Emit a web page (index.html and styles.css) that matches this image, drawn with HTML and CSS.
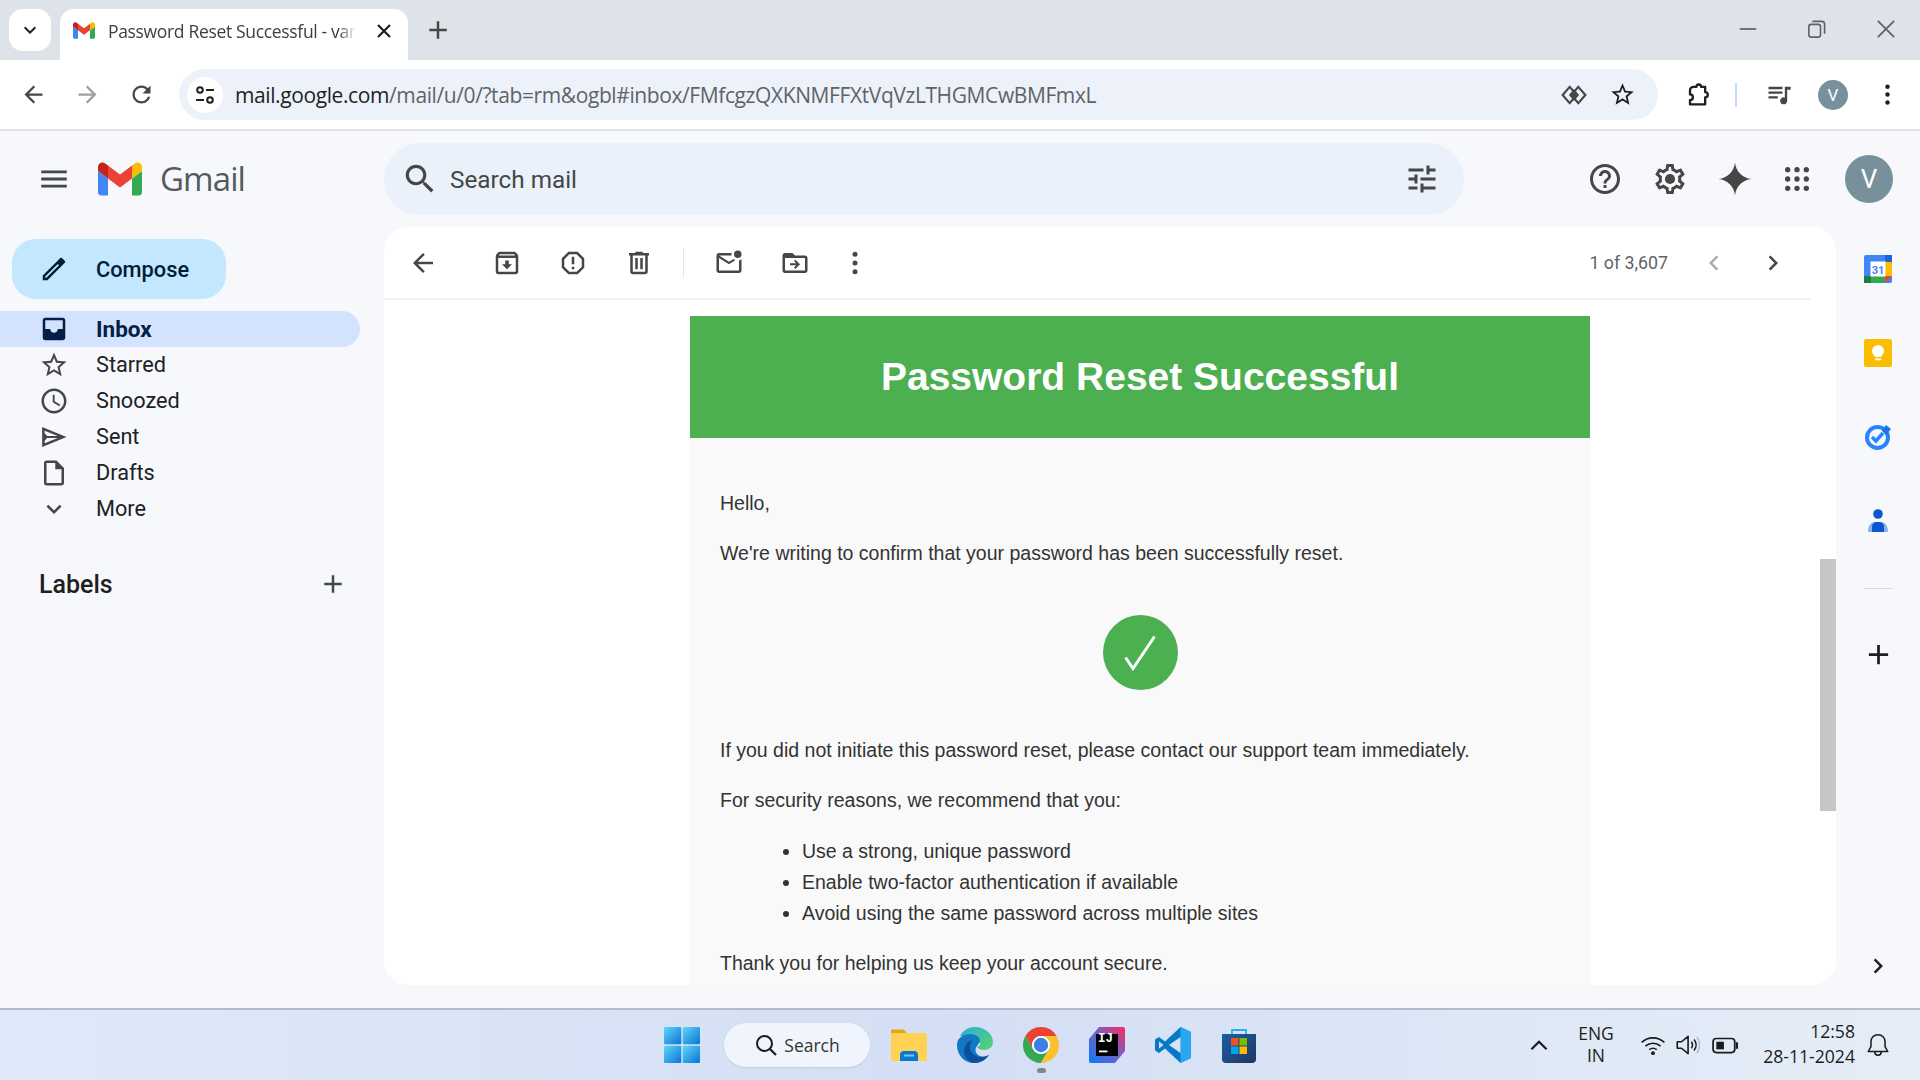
FILE: index.html
```html
<!DOCTYPE html>
<html lang="en">
<head>
<meta charset="utf-8">
<title>Password Reset Successful</title>
<link rel="stylesheet" href="styles.css">
</head>
<body>
<svg class="sprite" aria-hidden="true">
  <defs>
    <symbol id="back" viewBox="0 0 24 24"><path d="M20 11H7.83l5.59-5.59L12 4l-8 8 8 8 1.41-1.41L7.83 13H20v-2z"/></symbol>
    <symbol id="forward" viewBox="0 0 24 24"><path d="M12 4l-1.41 1.41L16.17 11H4v2h12.17l-5.58 5.59L12 20l8-8z"/></symbol>
    <symbol id="reload" viewBox="0 0 24 24"><path d="M17.65 6.35C16.2 4.9 14.21 4 12 4c-4.42 0-7.99 3.58-7.99 8s3.57 8 7.99 8c3.73 0 6.84-2.55 7.73-6h-2.08c-.82 2.33-3.04 4-5.65 4-3.31 0-6-2.69-6-6s2.69-6 6-6c1.66 0 3.14.69 4.22 1.78L13 11h7V4l-2.35 2.35z"/></symbol>
    <symbol id="star" viewBox="0 0 24 24"><path d="M22 9.24l-7.19-.62L12 2 9.19 8.63 2 9.24l5.46 4.73L5.82 21 12 17.27 18.18 21l-1.63-7.03L22 9.24zM12 15.4l-3.76 2.27 1-4.28-3.32-2.88 4.38-.38L12 6.1l1.71 4.04 4.38.38-3.32 2.88 1 4.28L12 15.4z"/></symbol>
    <symbol id="menu" viewBox="0 0 24 24"><path d="M3 18h18v-2H3v2zm0-5h18v-2H3v2zm0-7v2h18V6H3z"/></symbol>
    <symbol id="search" viewBox="0 0 24 24"><path d="M15.5 14h-.79l-.28-.27C15.41 12.59 16 11.11 16 9.5 16 5.91 13.09 3 9.5 3S3 5.91 3 9.5 5.91 16 9.5 16c1.61 0 3.09-.59 4.23-1.57l.27.28v.79l5 4.99L20.49 19l-4.99-5zm-6 0C7.01 14 5 11.99 5 9.5S7.01 5 9.5 5 14 7.01 14 9.5 11.99 14 9.5 14z"/></symbol>
    <symbol id="tune" viewBox="0 0 24 24"><path d="M3 17v2h6v-2H3zM3 5v2h10V5H3zm10 16v-2h8v-2h-8v-2h-2v6h2zM7 9v2H3v2h4v2h2V9H7zm14 4v-2H11v2h10zm-6-4h2V7h4V5h-4V3h-2v6z"/></symbol>
    <symbol id="help" viewBox="0 0 24 24"><path d="M11 18h2v-2h-2v2zm1-16C6.48 2 2 6.48 2 12s4.48 10 10 10 10-4.48 10-10S17.52 2 12 2zm0 18c-4.41 0-8-3.59-8-8s3.59-8 8-8 8 3.59 8 8-3.59 8-8 8zm0-14c-2.21 0-4 1.79-4 4h2c0-1.1.9-2 2-2s2 .9 2 2c0 2-3 1.75-3 5h2c0-2.25 3-2.5 3-5 0-2.21-1.79-4-4-4z"/></symbol>
    <symbol id="gear" viewBox="0 0 24 24"><path d="M19.43 12.98c.04-.32.07-.64.07-.98 0-.34-.03-.66-.07-.98l2.11-1.65c.19-.15.24-.42.12-.64l-2-3.46c-.09-.16-.26-.25-.44-.25-.06 0-.12.01-.17.03l-2.49 1c-.52-.4-1.08-.73-1.69-.98l-.38-2.65C14.46 2.18 14.25 2 14 2h-4c-.25 0-.46.18-.49.42l-.38 2.65c-.61.25-1.17.59-1.69.98l-2.49-1c-.06-.02-.12-.03-.18-.03-.17 0-.34.09-.43.25l-2 3.46c-.13.22-.07.49.12.64l2.11 1.65c-.04.32-.07.65-.07.98 0 .33.03.66.07.98l-2.11 1.65c-.19.15-.24.42-.12.64l2 3.46c.09.16.26.25.44.25.06 0 .12-.01.17-.03l2.49-1c.52.4 1.08.73 1.69.98l.38 2.65c.03.24.24.42.49.42h4c.25 0 .46-.18.49-.42l.38-2.65c.61-.25 1.17-.59 1.69-.98l2.49 1c.06.02.12.03.18.03.17 0 .34-.09.43-.25l2-3.46c.12-.22.07-.49-.12-.64l-2.11-1.65zm-1.98-1.71c.04.31.05.52.05.73 0 .21-.02.43-.05.73l-.14 1.13.89.7 1.08.84-.7 1.21-1.27-.51-1.04-.42-.9.68c-.43.32-.84.56-1.25.73l-1.06.43-.16 1.13-.2 1.35h-1.4l-.19-1.35-.16-1.13-1.06-.43c-.43-.18-.83-.41-1.23-.71l-.91-.7-1.06.43-1.27.51-.7-1.21 1.08-.84.89-.7-.14-1.13c-.03-.31-.05-.54-.05-.74s.02-.43.05-.73l.14-1.13-.89-.7-1.08-.84.7-1.21 1.27.51 1.04.42.9-.68c.43-.32.84-.56 1.25-.73l1.06-.43.16-1.13.2-1.35h1.39l.19 1.35.16 1.13 1.06.43c.43.18.83.41 1.23.71l.91.7 1.06-.43 1.27-.51.7 1.21-1.07.85-.89.7.14 1.13z"/><circle cx="12" cy="12" r="3.4"/></symbol>
    <symbol id="spark" viewBox="0 0 24 24"><path d="M12 1c.6 6 5 10.400 11 11-6 .6-10.400 5-11 11-.6-6-5-10.400-11-11 6-.6 10.400-5 11-11z"/></symbol>
    <symbol id="grid" viewBox="0 0 24 24"><circle cx="5" cy="5" r="2"/><circle cx="12" cy="5" r="2"/><circle cx="19" cy="5" r="2"/><circle cx="5" cy="12" r="2"/><circle cx="12" cy="12" r="2"/><circle cx="19" cy="12" r="2"/><circle cx="5" cy="19" r="2"/><circle cx="12" cy="19" r="2"/><circle cx="19" cy="19" r="2"/></symbol>
    <symbol id="inbox" viewBox="0 0 24 24"><path fill-rule="evenodd" d="M5 3h14c1.100 0 2 .9 2 2v14c0 1.100-.9 2-2 2H5c-1.100 0-2-.9-2-2V5c0-1.100.9-2 2-2zm0 2v7h4c0 1.660 1.340 3 3 3s3-1.340 3-3h4V5H5z"/></symbol>
    <symbol id="clock" viewBox="0 0 24 24"><path d="M11.990 2C6.470 2 2 6.480 2 12s4.470 10 9.990 10C17.520 22 22 17.520 22 12S17.520 2 11.990 2zM12 20c-4.420 0-8-3.580-8-8s3.580-8 8-8 8 3.580 8 8-3.580 8-8 8zm.5-13H11v6l5.250 3.150.75-1.230-4.500-2.670z"/></symbol>
    <symbol id="sent" viewBox="0 0 24 24"><path d="M2.500 4v16L22 12 2.500 4zm2 3l10.500 4.200H6.500L4.500 9V7zm0 10v-2l2-2.200H15L4.500 17z" fill-rule="evenodd"/></symbol>
    <symbol id="draft" viewBox="0 0 24 24"><path d="M14 2H6c-1.100 0-2 .9-2 2v16c0 1.100.9 2 2 2h12c1.100 0 2-.9 2-2V8l-6-6zM6 20V4h7v5h5v11H6z"/></symbol>
    <symbol id="down" viewBox="0 0 24 24"><path d="M16.590 8.590L12 13.170 7.410 8.590 6 10l6 6 6-6z"/></symbol>
    <symbol id="add" viewBox="0 0 24 24"><path d="M19 13h-6v6h-2v-6H5v-2h6V5h2v6h6v2z"/></symbol>
    <symbol id="pencil" viewBox="0 0 24 24"><path d="M20.700 7.040a1 1 0 0 0 0-1.410l-2.340-2.340a1 1 0 0 0-1.410 0l-1.840 1.830L3 17.250V21h3.750L18.870 8.880l1.830-1.840zM5.920 19H5v-.92L15.060 8.020l.92.92L5.920 19z"/></symbol>
    <symbol id="archive" viewBox="0 0 24 24"><path d="M20.540 5.230l-1.390-1.680C18.880 3.210 18.470 3 18 3H6c-.47 0-.88.21-1.160.55L3.460 5.230C3.170 5.570 3 6.020 3 6.500V19c0 1.100.9 2 2 2h14c1.100 0 2-.9 2-2V6.500c0-.48-.17-.93-.46-1.270zM6.240 5h11.520l.81.97H5.440l.8-.97zM5 19V8h14v11H5zm8.450-9h-2.900v3H8l4 4 4-4h-2.550z"/></symbol>
    <symbol id="report" viewBox="0 0 24 24"><path d="M15.730 3H8.270L3 8.270v7.460L8.270 21h7.460L21 15.730V8.270L15.730 3zM19 14.900L14.900 19H9.100L5 14.900V9.100L9.100 5h5.800L19 9.100v5.800zM11 7h2v6h-2zm0 8h2v2h-2z"/></symbol>
    <symbol id="trash" viewBox="0 0 24 24"><path d="M15 4V3H9v1H4v2h1v13c0 1.100.9 2 2 2h10c1.100 0 2-.9 2-2V6h1V4h-5zm2 15H7V6h10v13zM9 8h2v9H9zm4 0h2v9h-2z"/></symbol>
    <symbol id="unread" viewBox="0 0 24 24"><path d="M22 8.980V18c0 1.100-.9 2-2 2H4c-1.100 0-2-.9-2-2V6c0-1.100.9-2 2-2h10.100c-.06.32-.1.66-.1 1s.04.68.1 1H4l8 5 3.670-2.290c.47.43 1.020.76 1.630.98L12 13 4 8v10h16V9.900c.74-.15 1.420-.48 2-.92z"/><circle cx="19" cy="5" r="3"/></symbol>
    <symbol id="move" viewBox="0 0 24 24"><path d="M20 6h-8l-2-2H4c-1.100 0-2 .9-2 2v12c0 1.100.9 2 2 2h16c1.100 0 2-.9 2-2V8c0-1.100-.9-2-2-2zm0 12H4V8h16v10zM12.300 9.300l-1.100 1.100 1.800 1.800H8v1.600h5l-1.800 1.800 1.100 1.100 3.700-3.700z"/></symbol>
    <symbol id="vert" viewBox="0 0 24 24"><circle cx="12" cy="5" r="2"/><circle cx="12" cy="12" r="2"/><circle cx="12" cy="19" r="2"/></symbol>
    <symbol id="prev" viewBox="0 0 24 24"><path d="M15.410 7.410L14 6l-6 6 6 6 1.410-1.410L10.830 12z"/></symbol>
    <symbol id="next" viewBox="0 0 24 24"><path d="M8.590 16.590L10 18l6-6-6-6-1.410 1.410L13.170 12z"/></symbol>
    <symbol id="gm" viewBox="52 42 88 66"><path fill="#4285f4" d="M58 108h14V74L52 59v43c0 3.320 2.690 6 6 6"/><path fill="#34a853" d="M120 108h14c3.320 0 6-2.690 6-6V59l-20 15"/><path fill="#fbbc04" d="M120 48v26l20-15v-8c0-7.420-8.470-11.650-14.400-7.200"/><path fill="#ea4335" d="M72 74V48l24 18 24-18v26L96 92"/><path fill="#c5221f" d="M52 51v8l20 15V48l-5.600-4.200c-5.940-4.450-14.400-.22-14.400 7.200"/></symbol>
  </defs>
</svg>

<div class="screen">
  <header class="tabstrip">
    <button class="tabsearch"><svg class="i i-24"><use href="#down"/></svg></button>
    <div class="tab">
      <svg class="favicon"><use href="#gm"/></svg>
      <span class="tabtitle">Password Reset Successful - var</span>
      <svg class="i i-24 tabclose" viewBox="0 0 24 24"><path d="M6 6l12 12M18 6L6 18" fill="none" stroke="#1f1f1f" stroke-width="2.200"/></svg>
    </div>
    <svg class="i newtab"><use href="#add"/></svg>
    <div class="winctl">
      <svg class="wbtn" viewBox="0 0 24 24"><path d="M5 12h14" stroke="#5f6368" stroke-width="1.500"/></svg>
      <svg class="wbtn" viewBox="0 0 24 24"><rect x="5" y="8" width="10" height="11" rx="2" fill="none" stroke="#5f6368" stroke-width="1.400"/><path d="M8 5.500h8a2.500 2.500 0 0 1 2.500 2.500v8" fill="none" stroke="#5f6368" stroke-width="1.400"/></svg>
      <svg class="wbtn" viewBox="0 0 24 24"><path d="M5 5l14 14M19 5L5 19" stroke="#5f6368" stroke-width="1.500"/></svg>
    </div>
  </header>

  <nav class="toolbar">
    <svg class="i navbtn"><use href="#back"/></svg>
    <svg class="i navbtn dim"><use href="#forward"/></svg>
    <svg class="i navbtn"><use href="#reload"/></svg>
    <div class="omnibox">
      <span class="siteinfo">
        <svg class="i i-24" viewBox="0 0 24 24"><g fill="none" stroke="#1f1f1f" stroke-width="2"><circle cx="7" cy="7" r="2.800"/><circle cx="17" cy="17" r="2.800"/><path d="M13 7h8M3 17h8"/></g></svg>
      </span>
      <span class="url"><span class="host">mail.google.com</span>/mail/u/0/?tab=rm&amp;ogbl#inbox/FMfcgzQXKNMFFXtVqVzLTHGMCwBMFmxL</span>
      <svg class="omniicon" viewBox="0 0 24 24"><g fill="none" stroke="#444746" stroke-width="2" stroke-linejoin="miter"><path d="M8 4.500L1.500 12 8 19.500 14.500 12z"/><path d="M16 4.500L22.500 12 16 19.500 9.500 12z"/></g><path d="M12 6.500l4.700 5.500-4.700 5.500L7.300 12z" fill="#444746"/></svg>
      <svg class="omniicon star"><use href="#star"/></svg>
    </div>
    <svg class="tbicon puzzle" viewBox="0 0 24 24"><path d="M9 5h2.500a2 2 0 0 1 4 0H19v4.500a2.200 2.200 0 0 1 0 4.500V20H6v-3.500a2.500 2.500 0 0 0 0-5V8a3 3 0 0 1 3-3z" fill="none" stroke="#1f1f1f" stroke-width="2" stroke-linejoin="round"/></svg>
    <span class="tbsep"></span>
    <svg class="tbicon media" viewBox="0 0 24 24"><path d="M3 5h12v2H3zM3 9h12v2H3zM3 13h8v2H3z" fill="#444746"/><path d="M17 5h5v2.500h-3V17a3 3 0 1 1-2-2.800z" fill="#444746"/></svg>
    <span class="avatar avatar-sm">V</span>
    <svg class="i tbdots"><use href="#vert"/></svg>
  </nav>

  <div class="app">
    <aside class="sidebar">
      <div class="brand">
        <svg class="i hamburger"><use href="#menu"/></svg>
        <svg class="gmlogo"><use href="#gm"/></svg>
        <span class="gmailword">Gmail</span>
      </div>
      <button class="compose"><svg class="i navicon pen"><use href="#pencil"/></svg><span>Compose</span></button>
      <ul class="navlist">
        <li class="navitem active"><svg class="i navicon"><use href="#inbox"/></svg><span>Inbox</span></li>
        <li class="navitem"><svg class="i navicon"><use href="#star"/></svg><span>Starred</span></li>
        <li class="navitem"><svg class="i navicon"><use href="#clock"/></svg><span>Snoozed</span></li>
        <li class="navitem"><svg class="i navicon"><use href="#sent"/></svg><span>Sent</span></li>
        <li class="navitem"><svg class="i navicon"><use href="#draft"/></svg><span>Drafts</span></li>
        <li class="navitem"><svg class="i navicon"><use href="#down"/></svg><span>More</span></li>
      </ul>
      <div class="labels"><span>Labels</span><svg class="i labeladd"><use href="#add"/></svg></div>
    </aside>

    <div class="center">
      <div class="topbar">
        <div class="searchbox">
          <svg class="i searchicon"><use href="#search"/></svg>
          <span class="placeholder">Search mail</span>
          <svg class="i tuneicon"><use href="#tune"/></svg>
        </div>
        <div class="topicons">
          <svg class="i topicon"><use href="#help"/></svg>
          <svg class="i topicon"><use href="#gear"/></svg>
          <svg class="i topicon"><use href="#spark"/></svg>
          <svg class="i topicon topgrid"><use href="#grid"/></svg>
          <span class="avatar avatar-lg">V</span>
        </div>
      </div>
      <div class="workspace">
        <main class="card">
          <div class="mailbar">
            <svg class="i mi mi-back"><use href="#back"/></svg>
            <svg class="i mi mi-arch"><use href="#archive"/></svg>
            <svg class="i mi"><use href="#report"/></svg>
            <svg class="i mi"><use href="#trash"/></svg>
            <span class="misep"></span>
            <svg class="i mi mi-unread"><use href="#unread"/></svg>
            <svg class="i mi"><use href="#move"/></svg>
            <svg class="i mi mi-more"><use href="#vert"/></svg>
            <span class="pager">1 of 3,607</span>
            <svg class="i mi mi-prev"><use href="#prev"/></svg>
            <svg class="i mi mi-next"><use href="#next"/></svg>
          </div>
          <div class="mailscroll">
            <article class="email">
              <h1 class="emailhead">Password Reset Successful</h1>
              <div class="emailbody">
                <p class="first">Hello,</p>
                <p>We're writing to confirm that your password has been successfully reset.</p>
                <div class="okwrap"><span class="okcircle"><svg class="okcheck" viewBox="0 0 32 36"><path d="M1.500 22.500l7.500 11L30.500 1.500" fill="none" stroke="#fff" stroke-width="3"/></svg></span></div>
                <p>If you did not initiate this password reset, please contact our support team immediately.</p>
                <p>For security reasons, we recommend that you:</p>
                <ul>
                  <li>Use a strong, unique password</li>
                  <li>Enable two-factor authentication if available</li>
                  <li>Avoid using the same password across multiple sites</li>
                </ul>
                <p>Thank you for helping us keep your account secure.</p>
              </div>
            </article>
          </div>
          <span class="scrollthumb"></span>
        </main>
        <aside class="rail">
          <svg class="railicon" viewBox="0 0 28 28"><rect width="28" height="28" rx="2" fill="#4285f4"/><rect x="21" y="0" width="7" height="7" fill="#1967d2"/><rect x="21" y="7" width="7" height="14" fill="#fbbc04"/><rect y="21" width="21" height="7" fill="#34a853"/><rect y="21" width="7" height="7" fill="#188038"/><path d="M21 21h7l-7 7z" fill="#ea4335"/><rect x="6.500" y="6.500" width="15" height="15" fill="#fff"/><text x="14" y="18.500" class="caltext">31</text></svg>
          <svg class="railicon" viewBox="0 0 28 28"><rect width="28" height="28" rx="2.500" fill="#fbbc04"/><circle cx="14" cy="12" r="6" fill="#fff"/><rect x="11" y="16" width="6" height="2" fill="#fff"/><rect x="11" y="19.500" width="6" height="1.800" fill="#fff"/></svg>
          <svg class="railicon" viewBox="0 0 28 28"><circle cx="13.500" cy="14.500" r="10.500" fill="none" stroke="#2684fc" stroke-width="4"/><path d="M8 14l4 4 7-8" fill="none" stroke="#2684fc" stroke-width="3.500"/><path d="M22 2l5 4-5 6-4-4z" fill="#1a73e8"/></svg>
          <svg class="railicon" viewBox="0 0 28 28"><circle cx="14" cy="7" r="4.800" fill="#0b57d0"/><path d="M4 25c0-7 3-10 8-10h4c5 0 8 3 8 10z" fill="#8ab0ee"/><path d="M8 25v-5c0-3 2-5 5-5h2c3 0 5 2 5 5v5z" fill="#0b57d0"/></svg>
          <span class="railsep"></span>
          <svg class="i railadd"><use href="#add"/></svg>
          <svg class="i railnext"><use href="#next"/></svg>
        </aside>
      </div>
    </div>
  </div>

  <footer class="taskbar">
    <div class="taskapps">
      <svg class="tapp" viewBox="0 0 36 36"><defs><linearGradient id="win" x1="0" y1="0" x2="1" y2="1"><stop offset="0" stop-color="#5fd6fb"/><stop offset="1" stop-color="#0a74d6"/></linearGradient></defs><rect x="0" y="0" width="17.300" height="17.300" rx="1" fill="url(#win)"/><rect x="18.700" y="0" width="17.300" height="17.300" rx="1" fill="url(#win)"/><rect x="0" y="18.700" width="17.300" height="17.300" rx="1" fill="url(#win)"/><rect x="18.700" y="18.700" width="17.300" height="17.300" rx="1" fill="url(#win)"/></svg>
      <div class="tsearch"><svg class="tsearchicon" viewBox="0 0 24 24"><circle cx="10.500" cy="10.500" r="7.500" fill="none" stroke="#1c1c1c" stroke-width="2"/><path d="M16 16l6 6" stroke="#1c1c1c" stroke-width="2.200"/></svg><span>Search</span></div>
      <svg class="tapp" viewBox="0 0 36 36"><path d="M0 4a1.500 1.500 0 0 1 1.500-1.500h11L16 6H0z" fill="#e3a60f"/><path d="M0 6h34a2 2 0 0 1 2 2v25a1 1 0 0 1-1 1H1a1 1 0 0 1-1-1z" fill="#ffd255"/><path d="M9 34v-6a4 4 0 0 1 4-4h10a4 4 0 0 1 4 4v6z" fill="#0c78cc"/><rect x="13" y="27.500" width="10" height="2" fill="#7cc4f2"/></svg>
      <svg class="tapp" viewBox="0 0 36 36"><defs><linearGradient id="edgeA" x1="0" y1="0" x2="1" y2="1"><stop offset="0" stop-color="#27b2d8"/><stop offset="1" stop-color="#59d46a"/></linearGradient></defs><path d="M3 9C6 3 12 0 18 0c10 0 18 7 18 15 0 5-4 8-9 8-3 0-6-1-7-3 3-1 4-3 3-5-3-5-14-6-20-6z" fill="url(#edgeA)"/><path d="M0 18C0 11 6 7 13 7c5 0 10 3 10 7 0 2-2 3-3 5-4 5 0 12 10 11-4 4-8 6-13 6C7 36 0 28 0 18z" fill="#1278c4"/><path d="M17 36C11 35 7 30 7 24c0-6 4-10 9-11-2 2-3 4-3 7 0 7 7 13 19 8-3 5-9 8-15 8z" fill="#0e4f9c"/></svg>
      <svg class="tapp" viewBox="4 4 40 40"><path d="M24 4a20 20 0 0 1 17.320 10H24a10 10 0 0 0-8.660 15L6.680 14A20 20 0 0 1 24 4z" fill="#ea4335"/><path d="M6.680 14l8.660 15a10 10 0 0 0 17.320 0L24 44A20 20 0 0 1 6.680 14z" fill="#34a853"/><path d="M41.320 14A20 20 0 0 1 24 44l8.660-15A10 10 0 0 0 24 14z" fill="#fbc02d"/><circle cx="24" cy="24" r="10" fill="#fff"/><circle cx="24" cy="24" r="8" fill="#3d7fe8"/></svg>
      <div class="idea">
        <svg class="tapp" viewBox="0 0 36 36"><defs><linearGradient id="ij" x1="0" y1="1" x2="1" y2="0"><stop offset="0" stop-color="#0a7bf5"/><stop offset=".55" stop-color="#7b5fc5"/><stop offset="1" stop-color="#fe2857"/></linearGradient></defs><path d="M10 0h24a2 2 0 0 1 2 2v22l-10 12H2a2 2 0 0 1-2-2V12z" fill="url(#ij)"/><rect x="7" y="7" width="22" height="22" fill="#000"/><rect x="10" y="23.500" width="8.500" height="1.800" fill="#fff"/></svg>
        <span class="ijtext">IJ</span>
      </div>
      <svg class="tapp" viewBox="0 0 36 36"><path d="M25.500 0L36 5v26l-10.500 5L10 21.500 4 26 0 23.500V12.500L4 10l6 4.500z" fill="#0a78c8"/><path d="M25.500 0L36 5v26l-10.500 5z" fill="#26a8f2"/><path d="M25.500 10L14 18l11.500 8z" fill="#d6e2f5"/><path d="M4 14.500L8.500 18 4 21.500z" fill="#d6e2f5"/></svg>
      <svg class="tapp" viewBox="0 0 36 36"><defs><linearGradient id="store" x1="0" y1="0" x2="1" y2="1"><stop offset="0" stop-color="#1a60a8"/><stop offset="1" stop-color="#20365f"/></linearGradient></defs><path d="M11 7V3h14v4" fill="none" stroke="#23b6ea" stroke-width="1.800"/><path d="M1 7h34v25a4 4 0 0 1-4 4H5a4 4 0 0 1-4-4z" fill="url(#store)"/><rect x="10" y="11" width="7.500" height="7.500" fill="#f25022"/><rect x="18.500" y="11" width="7.500" height="7.500" fill="#7fba00"/><rect x="10" y="19.500" width="7.500" height="7.500" fill="#00a4ef"/><rect x="18.500" y="19.500" width="7.500" height="7.500" fill="#ffb900"/></svg>
      <span class="runpill"></span>
    </div>
    <div class="tray">
      <svg class="trayicon caret" viewBox="0 0 24 24"><path d="M5 16l7-7 7 7" fill="none" stroke="#1c1c1c" stroke-width="2"/></svg>
      <div class="lang"><span>ENG</span><span>IN</span></div>
      <svg class="trayicon" viewBox="0 0 24 24"><g fill="none" stroke="#1c1c1c" stroke-width="1.500"><path d="M1.500 9.500c6-5.500 15-5.500 21 0"/><path d="M5 13c4-3.500 10-3.500 14 0"/><path d="M8.500 16.300c2-1.500 5-1.500 7 0"/></g><circle cx="12" cy="19.500" r="1.800" fill="#1c1c1c"/></svg>
      <svg class="trayicon" viewBox="0 0 24 24"><path d="M3 9h4l6-5v16l-6-5H3z" fill="none" stroke="#1c1c1c" stroke-width="1.500" stroke-linejoin="round"/><path d="M16 9c1.500 2 1.500 4 0 6M18.500 7c2.500 3 2.500 7 0 10" fill="none" stroke="#1c1c1c" stroke-width="1.400"/><path d="M21 4.500c3.500 4.500 3.500 10.500 0 15" fill="none" stroke="#b4bcc8" stroke-width="1.300"/></svg>
      <svg class="trayicon" viewBox="0 0 24 24"><rect x="1" y="6" width="20" height="13" rx="3" fill="none" stroke="#1c1c1c" stroke-width="1.600"/><rect x="4" y="9" width="7" height="7" fill="#1c1c1c"/><path d="M22.500 10h1v5h-1z" fill="#1c1c1c" stroke="#1c1c1c"/></svg>
      <div class="clock"><span>12:58</span><span>28-11-2024</span></div>
      <svg class="trayicon bell" viewBox="0 0 24 24"><path d="M12 2.500c-4 0-6.500 3-6.500 6.500v4.500L3 18h18l-2.500-4.500V9c0-3.500-2.500-6.500-6.500-6.500zM9 18.500c0 2 1.300 3 3 3s3-1 3-3" fill="none" stroke="#1c1c1c" stroke-width="1.400" stroke-linejoin="round"/></svg>
    </div>
  </footer>
</div>
</body>
</html>
```
FILE: styles.css
```css
* { box-sizing: border-box; }
html, body { margin: 0; padding: 0; }
body { width: 1920px; height: 1080px; overflow: hidden; font-family: Roboto, "Liberation Sans", sans-serif; }
.sprite { display: none; }
.i { fill: #444746; flex: none; display: block; }
.i-24 { width: 24px; height: 24px; }
button { border: 0; font: inherit; padding: 0; }
ul { list-style: none; margin: 0; padding: 0; }

.screen { width: 1920px; height: 1080px; display: flex; flex-direction: column; }

/* tab strip */
.tabstrip { height: 60px; flex: none; background: #dee3ea; display: flex; align-items: flex-end; position: relative; }
.tabsearch { width: 42px; height: 42px; margin: 0 9px 9px 9px; border-radius: 14px; background: #fff; display: flex; align-items: center; justify-content: center; }
.tabsearch .i { fill: #1f1f1f; }
.tab { width: 348px; height: 51px; background: #fff; border-radius: 14px 14px 0 0; display: flex; align-items: center; padding: 0 12px 8px 13px; }
.favicon { width: 22px; height: 17px; flex: none; }
.tabtitle { margin-left: 13px; width: 248px; white-space: nowrap; font: 400 17.500px "Open Sans", sans-serif; color: #3c4043; -webkit-mask-image: linear-gradient(90deg, #000 93%, transparent); mask-image: linear-gradient(90deg, #000 93%, transparent); letter-spacing: -.33px; }
.tabclose { margin-left: 16px; }
.newtab { width: 30px; height: 30px; margin: 0 0 15px 15px; }
.winctl { margin-left: auto; display: flex; gap: 41px; padding: 0 20px 17px 0; }
.wbtn { width: 28px; height: 28px; display: block; }

/* browser toolbar */
.toolbar { height: 71px; flex: none; background: #fff; border-bottom: 2px solid #e1e3e1; border-radius: 16px 16px 0 0; display: flex; align-items: center; margin-top: 0; padding-left: 20px; }
.navbtn { width: 27px; height: 27px; margin-right: 27px; }
.navbtn.dim { fill: #9e9e9e; }
.toolbar .navbtn:nth-child(3) { margin-right: 24px; }
.omnibox { width: 1479px; height: 51px; border-radius: 26px; background: #edf2fa; display: flex; align-items: center; padding: 0 22px 0 8px; flex: none; }
.siteinfo { width: 36px; height: 36px; border-radius: 50%; background: #fff; display: flex; align-items: center; justify-content: center; flex: none; }
.url { margin-left: 12px; font: 400 21px "Open Sans", sans-serif; color: #5f6368; white-space: nowrap; letter-spacing: -.4px; flex: 1; }
.host { color: #1f1f1f; }
.omniicon { width: 26px; height: 26px; flex: none; fill: #444746; }
.omniicon.star { margin-left: 22px; fill: #1f1f1f; width: 27px; height: 27px; }
.tbicon { width: 28px; height: 28px; flex: none; }
.puzzle { margin-left: 25px; }
.tbsep { width: 2px; height: 24px; background: #c7dafc; margin: 0 28px 0 24px; flex: none; }
.avatar { border-radius: 50%; background: #78909c; color: #fff; display: flex; align-items: center; justify-content: center; flex: none; }
.avatar-sm { width: 30px; height: 30px; font-size: 17px; margin-left: 25px; }
.tbdots { width: 27px; height: 27px; margin-left: 26px; fill: #1f1f1f; }

/* app */
.app { flex: 1; min-height: 0; background: #f6f8fc; display: flex; }
.sidebar { width: 384px; flex: none; color: #202124; }
.brand { height: 96px; display: flex; align-items: center; padding-left: 37px; }
.hamburger { width: 34px; height: 34px; fill: #444746; }
.gmlogo { width: 44px; height: 34px; margin-left: 27px; }
.gmailword { margin-left: 18px; font: 400 33px "Open Sans", sans-serif; letter-spacing: -.9px; color: #555a5e; position: relative; top: -1px; }
.compose { width: 214px; height: 60px; margin: 12px 0 0 12px; border-radius: 24px; background: #c2e7ff; display: flex; align-items: center; color: #001d35; font: 500 21.800px Roboto, sans-serif; padding-left: 27px; }
.compose span { margin-left: 27px; }
.pen { fill: #001d35; }
.navicon { width: 30px; height: 30px; flex: none; }
.navlist { margin-top: 12px; width: 360px; }
.navitem { height: 36px; display: flex; align-items: center; padding-left: 39px; font-size: 21.700px; border-radius: 0 18px 18px 0; color: #202124; }
.navitem span { margin: -1px 0 0 27px; }
.navitem.active { background: #d3e3fd; font-weight: 700; font-size: 22.500px; color: #041e49; }
.navitem.active .i { fill: #041e49; }
.labels { margin: 39px 0 0 39px; width: 321px; height: 36px; display: flex; align-items: center; justify-content: space-between; font: 500 25px Roboto, sans-serif; color: #1f1f1f; }
.labeladd { width: 30px; height: 30px; margin-right: 12px; }

.center { flex: 1; min-width: 0; display: flex; flex-direction: column; }
.topbar { height: 96px; display: flex; align-items: flex-start; padding-top: 12px; flex: none; }
.searchbox { width: 1080px; height: 72px; border-radius: 36px; background: #eaf1fb; display: flex; align-items: center; padding: 0 20px 0 17px; flex: none; }
.searchicon { width: 38px; height: 38px; }
.placeholder { margin-left: 11px; font-size: 24.300px; color: #444746; flex: 1; }
.tuneicon { width: 36px; height: 36px; margin-right: 4px; }
.topicons { display: flex; align-items: center; height: 72px; padding-left: 123px; gap: 29px; }
.topicon { width: 36px; height: 36px; }
.topgrid { width: 32px; height: 32px; margin: 0 2px 0 -1px; }
.avatar-lg { width: 48px; height: 48px; font-size: 26px; margin-left: 1px; }

.workspace { flex: 1; display: flex; min-height: 0; }
.card { width: 1452px; height: 758px; background: #fff; border-radius: 24px; position: relative; overflow: hidden; display: flex; flex-direction: column; flex: none; }
.mailbar { height: 73px; width: 1426px; flex: none; display: flex; align-items: center; padding-left: 24px; border-bottom: 2px solid #efefef; }
.mi { width: 30px; height: 30px; }
.mi-back { margin-right: 54px; }
.mi-arch + .mi, .mi-arch + .mi + .mi { margin-left: 36px; }
.misep { width: 1px; height: 30px; background: #e8e8e8; margin: 0 30px 0 29px; }
.mi-unread + .mi { margin-left: 36px; }
.mi-more { margin-left: 30px; }
.pager { margin-left: auto; font-size: 17.800px; color: #5f6368; }
.mi-prev { margin-left: 31px; fill: #a9acaf; }
.mi-next { margin-left: 29px; margin-right: 22px; }
.mailscroll { flex: 1; min-height: 0; overflow: hidden; padding: 16px 0 0 306px; }
.email { width: 900px; }
.emailhead { margin: 0; height: 122px; background: #4caf50; color: #fff; font: 700 39px/122px "Liberation Sans", Arial, sans-serif; text-align: center; }
.emailbody { background: #f9f9f9; padding: 0 30px 30px; font: 400 19.500px/31px "Liberation Sans", Arial, sans-serif; color: #333; }
.emailbody p { margin: 0 0 19px; }
.emailbody .first { padding-top: 50px; }
.emailbody ul { list-style: disc; padding-left: 82px; margin: 20px 0 19px; }
.okwrap { display: flex; justify-content: center; margin: 46px 0 45px; }
.okcircle { width: 75px; height: 75px; border-radius: 50%; background: #4caf50; display: flex; align-items: center; justify-content: center; }
.okcheck { width: 32px; height: 36px; display: block; }
.scrollthumb { position: absolute; right: 0; top: 332px; width: 16px; height: 252px; background: #c6c6c6; }

.rail { flex: 1; position: relative; display: flex; flex-direction: column; align-items: center; padding-top: 28px; margin-left: 0; }
.railicon { width: 28px; height: 28px; flex: none; margin-bottom: 56px; }
.caltext { font: 700 11px Roboto, sans-serif; fill: #4285f4; text-anchor: middle; }
.railsep { width: 30px; height: 1px; background: #dadce0; margin-top: -3px; }
.railadd { width: 33px; height: 33px; margin-top: 49px; fill: #1f1f1f; }
.railnext { width: 30px; height: 30px; fill: #1f1f1f; position: absolute; top: 724px; left: 27px; }

/* taskbar */
.taskbar { height: 72px; flex: none; border-top: 2px solid #b5bcc7; background: linear-gradient(90deg, #dfe9f9 0%, #d4dff5 50%, #e5eef7 100%); display: flex; align-items: center; justify-content: space-between; }
.taskapps { display: flex; align-items: center; margin-left: 664px; position: relative; }
.tapp { width: 36px; height: 36px; flex: none; display: block; margin-right: 30px; }
.tsearch { width: 146px; height: 44px; border-radius: 22px; background: #f0f5fd; margin: 0 21px 0 -6px; display: flex; align-items: center; justify-content: center; gap: 6px; font: 400 17.500px "Open Sans", sans-serif; color: #333; box-shadow: 0 1px 2px rgba(0,0,0,.1); }
.tsearchicon { width: 24px; height: 24px; }
.idea { position: relative; }
.ijtext { position: absolute; left: 9px; top: 5px; color: #fff; font: 700 12.500px "Liberation Mono", monospace; }
.runpill { position: absolute; left: 373px; bottom: -6px; width: 9px; height: 5px; border-radius: 3px; background: #7f8791; }
.tray { display: flex; align-items: center; }
.trayicon { width: 26px; height: 26px; flex: none; display: block; }
.caret { margin-right: 14px; }
.lang { width: 60px; display: flex; flex-direction: column; align-items: center; font: 400 17.500px/22.500px "Open Sans", sans-serif; color: #1c1c1c; margin-right: 14px; position: relative; top: -1px; }
.tray .lang + .trayicon { margin-right: 8px; }
.tray .lang + .trayicon + .trayicon { margin-right: 12px; }
.clock { display: flex; flex-direction: column; align-items: flex-end; width: 99px; margin-left: 18px; font: 400 17.600px/25px "Open Sans", sans-serif; color: #1c1c1c; position: relative; top: -1px; }
.bell { margin: 0 29px 0 10px; }
```
